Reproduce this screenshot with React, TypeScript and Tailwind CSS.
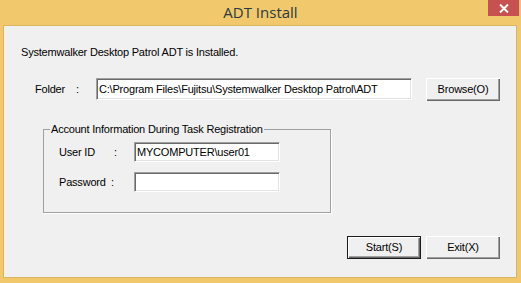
import React from 'react';

const ui = { fontFamily: '"Liberation Sans", Arial, sans-serif' };

function Field({ value, className }: { value?: string; className: string }) {
  return (
    <div
      className={`flex items-center bg-white border border-t-[#a0a0a0] border-l-[#a0a0a0] border-b-white border-r-white shadow-[inset_1px_1px_0_#696969,inset_-1px_-1px_0_#e3e3e3] pl-[2px] text-[11px] text-black whitespace-nowrap overflow-hidden ${className}`}
    >
      {value}
    </div>
  );
}

function Btn({ label, primary }: { label: string; primary?: boolean }) {
  return (
    <button
      type="button"
      className={`w-[74px] h-[23px] bg-[#f0f0f0] text-[11px] text-black flex items-center justify-center ${
        primary
          ? 'border border-[#1a1a1a] shadow-[inset_1px_1px_0_#ffffff,inset_-1px_-1px_0_#696969,inset_-2px_-2px_0_#a0a0a0]'
          : 'shadow-[inset_1px_1px_0_#ffffff,inset_-1px_-1px_0_#696969,inset_-2px_-2px_0_#a0a0a0]'
      }`}
    >
      {label}
    </button>
  );
}

export default function App() {
  return (
    <div className="w-[521px] h-[283px] bg-[#f1c96c] flex flex-col overflow-hidden" style={ui}>
      {/* Title bar */}
      <div className="h-[25px] grid grid-cols-[1fr_auto_1fr] items-start shrink-0">
        <div />
        <div
          className="text-[15px] leading-[22px] text-[#2c3a40] pt-[1px]"
          style={{ fontFamily: '"Open Sans", "Noto Sans", sans-serif' }}
        >
          ADT Install
        </div>
        <div className="flex justify-end pr-[2px]">
          <div className="w-[31px] h-[16px] bg-[#c75050] flex items-center justify-center">
            <svg width="10" height="9" viewBox="0 0 10 9">
              <path d="M1 0.5 L9 8.5 M9 0.5 L1 8.5" stroke="#fff" strokeWidth="2" />
            </svg>
          </div>
        </div>
      </div>

      {/* Client area */}
      <div className="ml-[3px] mr-[4px] h-[253px] bg-[#f0f0f0] border border-[#d9b562] flex flex-col text-[11px] tracking-[-0.2px] text-black">
        <div className="mt-[20px] ml-[17px] leading-[13px] h-[13px]">
          Systemwalker Desktop Patrol ADT is Installed.
        </div>

        {/* Folder row */}
        <div className="mt-[19px] flex items-start h-[23px]">
          <div className="ml-[31px] w-[61px] flex h-[22px] items-center">
            <span className="w-[41px]">Folder</span>
            <span>:</span>
          </div>
          <Field value="C:\Program Files\Fujitsu\Systemwalker Desktop Patrol\ADT" className="w-[316px] h-[22px]" />
          <div className="ml-[14px]">
            <Btn label="Browse(O)" />
          </div>
        </div>

        {/* Group box */}
        <fieldset className="mt-[22px] ml-[39px] w-[288px] h-[90px] border border-[#a0a0a0] shadow-[1px_1px_0_#ffffff] px-0">
          <legend className="ml-[6px] px-[1px] leading-[13px]">Account Information During Task Registration</legend>
          <div className="mt-[6px] flex flex-col gap-[10px]">
            <div className="flex items-center h-[20px]">
              <div className="ml-[15px] w-[75px] flex">
                <span className="w-[55px]">User ID</span>
                <span>:</span>
              </div>
              <Field value="MYCOMPUTER\user01" className="w-[146px] h-[20px]" />
            </div>
            <div className="flex items-center h-[20px]">
              <div className="ml-[15px] w-[75px] flex">
                <span className="w-[52px]">Password</span>
                <span>:</span>
              </div>
              <Field className="w-[146px] h-[20px]" />
            </div>
          </div>
        </fieldset>

        {/* Buttons */}
        <div className="mt-[23px] mr-[16px] flex justify-end gap-[5px]">
          <Btn label="Start(S)" primary />
          <Btn label="Exit(X)" />
        </div>
      </div>
    </div>
  );
}
